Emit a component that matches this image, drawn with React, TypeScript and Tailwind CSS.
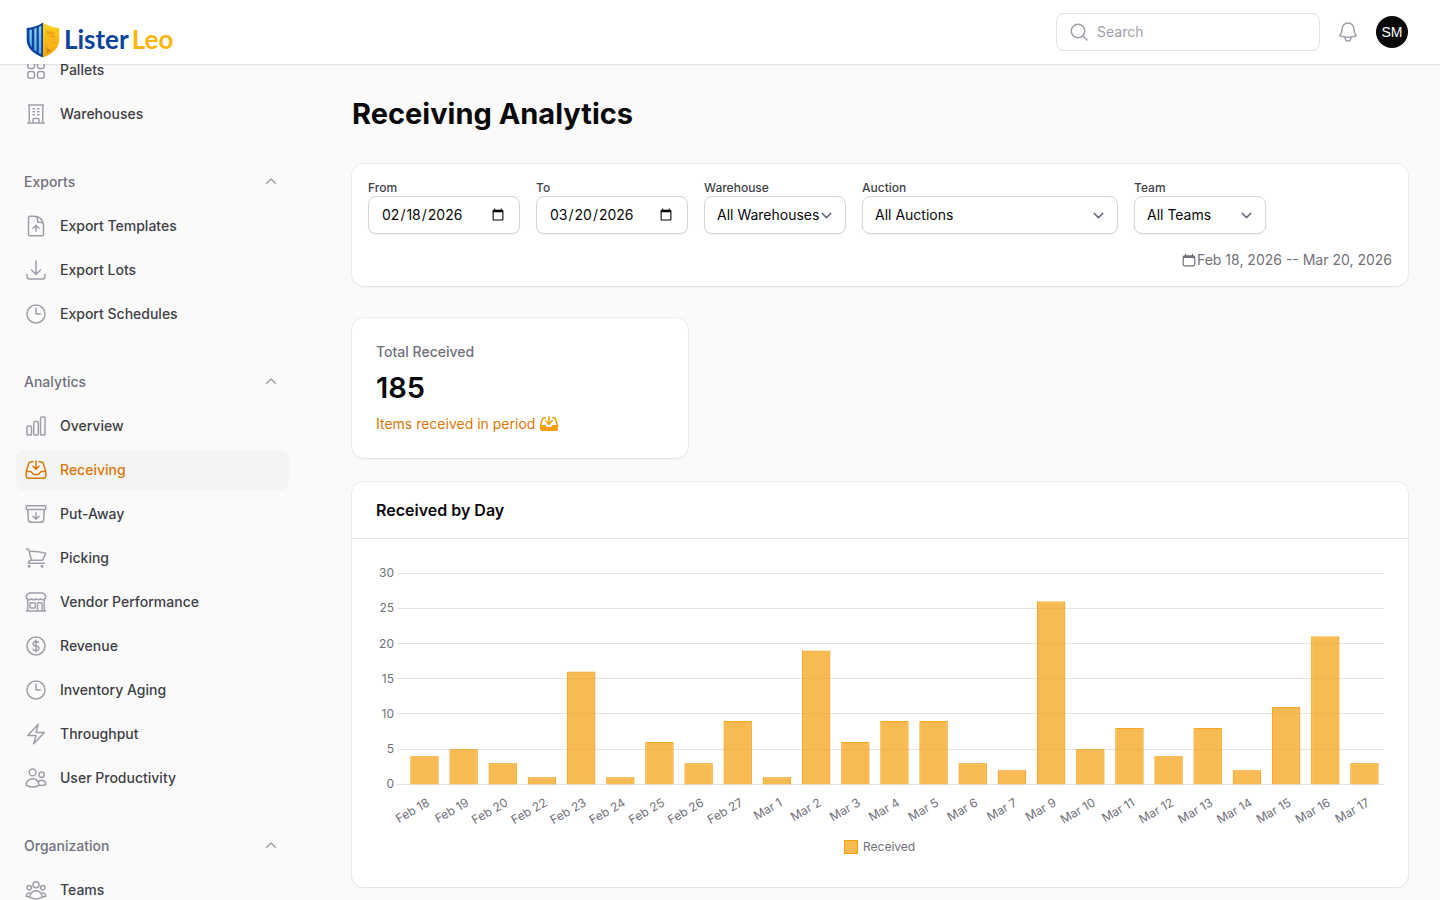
import type { ComponentType, ReactNode } from "react";
import {
  HiMiniCalendar,
  HiMiniChevronUp,
  HiMiniInboxArrowDown,
  HiOutlineArchiveBoxArrowDown,
  HiOutlineArrowDownTray,
  HiOutlineBell,
  HiOutlineBolt,
  HiOutlineBuildingOffice,
  HiOutlineBuildingStorefront,
  HiOutlineChartBar,
  HiOutlineClock,
  HiOutlineCurrencyDollar,
  HiOutlineDocumentArrowUp,
  HiOutlineInboxArrowDown,
  HiOutlineShoppingCart,
  HiOutlineSquares2X2,
  HiOutlineUserGroup,
  HiOutlineUsers,
} from "react-icons/hi2";

type Icon = ComponentType<{ className?: string }>;
type NavItem = { label: string; icon: Icon; active?: boolean };
type NavGroup = { label?: string; items: NavItem[] };

const navigation: NavGroup[] = [
  {
    items: [
      { label: "Pallets", icon: HiOutlineSquares2X2 },
      { label: "Warehouses", icon: HiOutlineBuildingOffice },
    ],
  },
  {
    label: "Exports",
    items: [
      { label: "Export Templates", icon: HiOutlineDocumentArrowUp },
      { label: "Export Lots", icon: HiOutlineArrowDownTray },
      { label: "Export Schedules", icon: HiOutlineClock },
    ],
  },
  {
    label: "Analytics",
    items: [
      { label: "Overview", icon: HiOutlineChartBar },
      { label: "Receiving", icon: HiOutlineInboxArrowDown, active: true },
      { label: "Put-Away", icon: HiOutlineArchiveBoxArrowDown },
      { label: "Picking", icon: HiOutlineShoppingCart },
      { label: "Vendor Performance", icon: HiOutlineBuildingStorefront },
      { label: "Revenue", icon: HiOutlineCurrencyDollar },
      { label: "Inventory Aging", icon: HiOutlineClock },
      { label: "Throughput", icon: HiOutlineBolt },
      { label: "User Productivity", icon: HiOutlineUsers },
    ],
  },
  {
    label: "Organization",
    items: [{ label: "Teams", icon: HiOutlineUserGroup }],
  },
];

const received: [string, number][] = [
  ["Feb 18", 4],
  ["Feb 19", 5],
  ["Feb 20", 3],
  ["Feb 22", 1],
  ["Feb 23", 16],
  ["Feb 24", 1],
  ["Feb 25", 6],
  ["Feb 26", 3],
  ["Feb 27", 9],
  ["Mar 1", 1],
  ["Mar 2", 19],
  ["Mar 3", 6],
  ["Mar 4", 9],
  ["Mar 5", 9],
  ["Mar 6", 3],
  ["Mar 7", 2],
  ["Mar 9", 26],
  ["Mar 10", 5],
  ["Mar 11", 8],
  ["Mar 12", 4],
  ["Mar 13", 8],
  ["Mar 14", 2],
  ["Mar 15", 11],
  ["Mar 16", 21],
  ["Mar 17", 3],
];

function Logo() {
  return (
    <a href="#" aria-label="ListerLeo" className="flex items-center gap-1 pt-4">
      <svg viewBox="0 0 34 36" className="h-9 w-[34px]" aria-hidden="true">
        <defs>
          <linearGradient id="gold" x1="0" y1="0" x2="0" y2="1">
            <stop offset="0" stopColor="#ffd021" />
            <stop offset="1" stopColor="#f5a506" />
          </linearGradient>
          <linearGradient id="sky" x1="0" y1="0" x2="0" y2="1">
            <stop offset="0" stopColor="#8ccdf8" />
            <stop offset="1" stopColor="#5aa6e6" />
          </linearGradient>
        </defs>
        <path d="M17 0.500C12.500 3.800 6.500 5.600 0.700 6V17.500C0.700 26 7 31.500 17 35.500Z" fill="#0b449b" />
        <path d="M17 0.500C21.500 3.800 27.500 5.600 33.300 6V17.500C33.300 26 27 31.500 17 35.500Z" fill="url(#gold)" />
        <path d="M3.400 8.200 5.800 7.500V25.500C4.200 23.300 3.400 20.800 3.400 17.500Z" fill="url(#sky)" />
        <path d="M8.200 6.900 10.600 5.800V29.600L8.200 27.900Z" fill="url(#sky)" />
        <path d="M12.800 5 15.200 3.700V32.200L12.800 31Z" fill="url(#sky)" />
        <path
          d="M20 8.500C23 7.500 26 8.500 28.500 10L30 13.500 29 15.500 31 17.500 30 19.500 29.300 22 25.500 22.300C22.500 23.500 25 26.500 27.500 26.500 25 29.800 21.500 31.800 18.500 33 21.500 28 17.500 25 19.500 21 21 18.500 24 18 22.500 15 21.500 12.500 19 12 20 8.500Z"
          fill="#f7b41c"
        />
        <path d="M20.500 22.500C20 26 22.500 27.500 26 28L20 32C21.500 29 19.500 27 20.500 22.500Z" fill="#d98309" />
        <path d="M21.500 10.500C24 11.500 26 10.500 28 11.500M25 14 28 14.600M27 20.800 29.500 20" fill="none" stroke="#cf860f" strokeWidth="0.700" />
      </svg>
      <span className="flex gap-[3px] pb-0.5 font-['Lato',sans-serif] text-[26px] leading-8 font-bold">
        <span className="text-[#0b449b]">Lister</span>
        <span className="text-[#fdb60d]">Leo</span>
      </span>
    </a>
  );
}

function TopBar() {
  return (
    <header className="sticky top-0 z-10 flex h-16 items-center justify-between bg-white pr-8 pl-[26px] shadow-xs ring-1 ring-[#09090b]/5">
      <Logo />
      <div className="flex items-center gap-4">
        <label className="flex h-[38px] w-[264px] items-center gap-2 rounded-lg border border-zinc-200 bg-white px-3">
          <svg viewBox="0 0 20 20" className="size-5 text-zinc-400" fill="none" stroke="currentColor" strokeWidth="1.500" strokeLinecap="round" aria-hidden="true">
            <circle cx="9" cy="9" r="6.800" />
            <path d="m14 14 4 4" />
          </svg>
          <input
            type="search"
            aria-label="Search"
            placeholder="Search"
            className="min-w-0 flex-1 bg-transparent text-sm outline-none placeholder:text-zinc-400"
          />
        </label>
        <button type="button" aria-label="Notifications" className="text-zinc-400">
          <HiOutlineBell className="size-6" />
        </button>
        <button type="button" aria-label="User menu" className="size-8 rounded-full bg-[#09090b] font-['Liberation_Sans',sans-serif] text-sm text-white">
          SM
        </button>
      </div>
    </header>
  );
}

function Sidebar() {
  return (
    <aside className="sticky top-16 h-[calc(100vh-4rem)] w-80 shrink-0 overflow-hidden">
      <nav className="-mt-3.5 flex flex-col gap-7 pr-[31px] pl-4">
        {navigation.map((group) => (
          <div key={group.label ?? "main"} className="flex flex-col gap-1">
            {group.label && (
              <button type="button" className="flex h-10 items-center justify-between px-2 text-sm font-medium text-zinc-500">
                {group.label}
                <HiMiniChevronUp className="size-5 text-zinc-400" />
              </button>
            )}
            <ul className="flex flex-col gap-1">
              {group.items.map(({ label, icon: ItemIcon, active }) => (
                <li key={label}>
                  <a
                    href="#"
                    aria-current={active ? "page" : undefined}
                    className={`flex h-10 items-center gap-3 rounded-lg px-2 text-sm font-medium ${active ? "bg-zinc-100 text-[#d97706]" : "text-zinc-700"}`}
                  >
                    <ItemIcon className={`size-6 ${active ? "text-[#d97706]" : "text-zinc-400"}`} />
                    {label}
                  </a>
                </li>
              ))}
            </ul>
          </div>
        ))}
      </nav>
    </aside>
  );
}

function Card({ className, children }: { className?: string; children: ReactNode }) {
  return <section className={`rounded-xl bg-white shadow-xs ring-1 ring-[#09090b]/5 ${className ?? ""}`}>{children}</section>;
}

const fieldStyle = "h-[38px] w-full rounded-lg border border-zinc-300 bg-white px-3 text-sm text-[#09090b] shadow-xs outline-none";

function DateField({ id, label, value }: { id: string; label: string; value: string }) {
  return (
    <div className="flex w-[152px] flex-col">
      <label htmlFor={id} className="text-xs font-medium text-zinc-700">
        {label}
      </label>
      <input id={id} type="date" defaultValue={value} className={fieldStyle} />
    </div>
  );
}

function SelectField({ id, label, option, width }: { id: string; label: string; option: string; width: string }) {
  return (
    <div className={`flex flex-col ${width}`}>
      <label htmlFor={id} className="text-xs font-medium text-zinc-700">
        {label}
      </label>
      <div className="relative">
        <select id={id} className={`${fieldStyle} appearance-none`}>
          <option>{option}</option>
        </select>
        <svg
          viewBox="0 0 20 20"
          className="pointer-events-none absolute inset-y-0 right-[9px] my-auto size-[21px] text-gray-500"
          fill="none"
          stroke="currentColor"
          strokeWidth="1.500"
          strokeLinecap="round"
          strokeLinejoin="round"
          aria-hidden="true"
        >
          <path d="m6 8 4 4 4-4" />
        </svg>
      </div>
    </div>
  );
}

function Filters() {
  return (
    <Card className="flex flex-wrap items-end gap-4 p-4">
      <DateField id="from" label="From" value="2026-02-18" />
      <DateField id="to" label="To" value="2026-03-20" />
      <SelectField id="warehouse" label="Warehouse" option="All Warehouses" width="w-[142px]" />
      <SelectField id="auction" label="Auction" option="All Auctions" width="w-64" />
      <SelectField id="team" label="Team" option="All Teams" width="w-[132px]" />
      <div className="ml-auto flex items-center text-sm text-zinc-500">
        <HiMiniCalendar className="size-4" />
        Feb 18, 2026 -- Mar 20, 2026
      </div>
    </Card>
  );
}

function TotalCard() {
  return (
    <Card className="flex flex-col gap-2 p-6">
      <h2 className="text-sm font-medium text-zinc-500">Total Received</h2>
      <p className="text-[29px] leading-9 font-semibold text-[#09090b]">185</p>
      <p className="flex items-center gap-1 text-sm text-[#d97706]">
        Items received in period
        <HiMiniInboxArrowDown className="size-5 text-[#f59e0b]" />
      </p>
    </Card>
  );
}

const plot = { left: 28.9, right: 1008, top: 10.3, bottom: 221.3, max: 30 };
const step = (plot.right - plot.left) / received.length;
const barWidth = step * 0.72;
const yOf = (value: number) => plot.bottom - (value / plot.max) * (plot.bottom - plot.top);

function BarChart() {
  return (
    <svg viewBox="0 0 1008 300" className="block h-auto w-full" role="img" aria-label="Items received by day">
      <g fontSize="12" fill="#71717a">
        {[0, 5, 10, 15, 20, 25, 30].map((tick) => (
          <g key={tick}>
            <path d={`M21 ${Math.floor(yOf(tick)) + 0.5}H1008`} stroke="#e4e4e7" />
            <text x="18" y={yOf(tick) + 4} textAnchor="end">
              {tick}
            </text>
          </g>
        ))}
        {received.map(([day, count], index) => {
          const center = plot.left + step * (index + 0.5);
          const x = center - barWidth / 2;
          const y = yOf(count);
          return (
            <g key={day}>
              <path
                d={`M${x} ${y}h${barWidth}V${plot.bottom}h-${barWidth}Z M${x + 1} ${y + 1}h${barWidth - 2}V${plot.bottom}h-${barWidth - 2}Z`}
                fill="#f59e0b"
                fillOpacity="0.9"
                fillRule="evenodd"
              />
              <path d={`M${x + 1} ${y + 1}h${barWidth - 2}V${plot.bottom}h-${barWidth - 2}Z`} fill="#f59e0b" fillOpacity="0.7" />
              <text textAnchor="end" transform={`translate(${center + 6} 242) rotate(-30)`}>
                {day}
              </text>
            </g>
          );
        })}
        <rect x="468.500" y="277.500" width="13" height="13" fill="#f59e0b" fillOpacity="0.7" stroke="#f59e0b" />
        <text x="487" y="288">
          Received
        </text>
      </g>
    </svg>
  );
}

export default function App() {
  return (
    <div className="min-h-screen bg-zinc-50 font-['Inter',sans-serif] text-[#09090b]">
      <TopBar />
      <div className="flex">
        <Sidebar />
        <main className="flex min-w-0 flex-1 flex-col gap-8 px-8 pt-8 pb-3">
          <h1 className="text-[29px] leading-9 font-bold">Receiving Analytics</h1>
          <Filters />
          <div className="flex flex-col gap-6">
            <div className="grid grid-cols-3 gap-6">
              <TotalCard />
            </div>
            <Card>
              <h2 className="border-b border-zinc-200 px-6 py-4 text-base font-semibold">Received by Day</h2>
              <div className="p-6">
                <BarChart />
              </div>
            </Card>
          </div>
        </main>
      </div>
    </div>
  );
}
